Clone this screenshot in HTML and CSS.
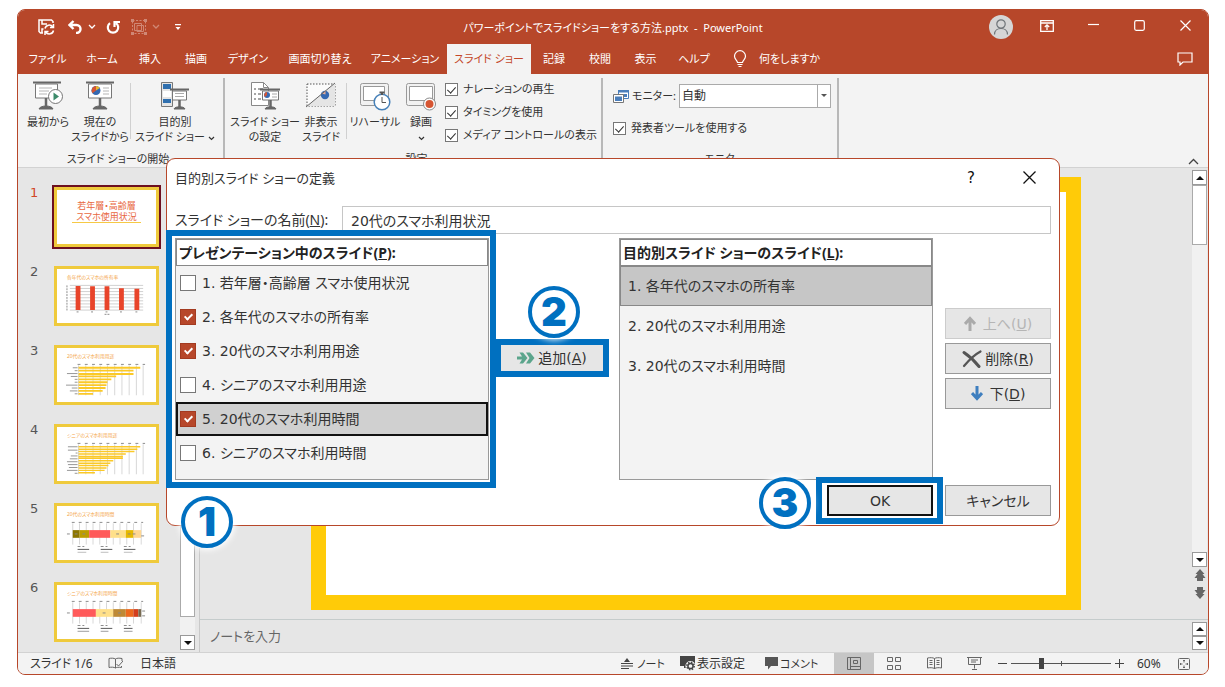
FILE: index.html
```html
<!DOCTYPE html>
<html lang="ja">
<head>
<meta charset="utf-8">
<title>パワーポイントでスライドショーをする方法.pptx - PowerPoint</title>
<link rel="stylesheet" href="styles.css">
</head>
<body>
<div class="window">
  <header class="titlebar">
    <div class="quick">
      <button class="qbtn save" aria-label="上書き保存"><svg width="17" height="17" viewBox="0 0 17 17" fill="none" stroke="#fff" stroke-width="1.500"><path d="M5 14H2.500L1 12.500V1h12.500l1.500 1.500V4M4 1v4h5M4 14v-4h1.500"/><path d="M7 9.500a4.300 4.300 0 0 1 7.800-1.500M15.500 11.500a4.300 4.300 0 0 1-7.800 1.500M15.500 5v3.500H12M7 16v-3.500h3.500"/></svg></button>
      <button class="qbtn undo" aria-label="元に戻す"><svg width="14" height="14" viewBox="0 0 14 14" fill="none" stroke="#fff" stroke-width="2.400"><path d="M5.500 1 1.500 5l4 4M2 5h6.500a4 4 0 0 1 0 8H8"/></svg></button>
      <button class="qbtn chev1" aria-label="元に戻す一覧"><svg width="8" height="6" viewBox="0 0 8 6" fill="none" stroke="#fff" stroke-width="1.300"><path d="m1 1 3 3 3-3"/></svg></button>
      <button class="qbtn redo" aria-label="繰り返し"><svg width="15" height="15" viewBox="0 0 15 15" fill="none" stroke="#fff" stroke-width="2.200"><path d="M10 3.200A5.200 5.200 0 1 1 4 3.200M8.500 7V2h5.500"/></svg></button>
      <button class="qbtn group faint" aria-label="グループ化"><svg width="16" height="16" viewBox="0 0 16 16" fill="none" stroke="#fff"><path d="M1.500 1.500h13v13h-13z" stroke-dasharray="2 1.500"/><path d="M3.500 4.500h7v7h-7zM6 6.500h6.500v6H6z"/><path d="M0 0h3v3H0zM13 0h3v3h-3zM0 13h3v3H0zM13 13h3v3h-3z" fill="#fff" stroke="none"/></svg></button>
      <button class="qbtn chev2 faint" aria-label="グループ化一覧"><svg width="8" height="6" viewBox="0 0 8 6" fill="none" stroke="#fff" stroke-width="1.300"><path d="m1 1 3 3 3-3"/></svg></button>
      <button class="qbtn more" aria-label="ユーザー設定"><svg width="6" height="7" viewBox="0 0 6 7" fill="#fff"><path d="M0 0h6v1.200H0zM.5 3h5L3 6z"/></svg></button>
    </div>
    <h1 class="doc-title">パワーポイントでスライドショーをする方法.pptx&nbsp; -&nbsp; PowerPoint</h1>
    <div class="caption">
      <button class="avatar" aria-label="アカウント"><svg width="24" height="24" viewBox="0 0 24 24" fill="none" stroke="#6e7377" stroke-width="1.200"><circle cx="12" cy="9" r="4.200"/><path d="M5.500 19.500c0-8 13-8 13 0"/></svg></button>
      <button class="cbtn" aria-label="リボンの表示オプション"><svg width="14" height="12" viewBox="0 0 14 12" fill="none" stroke="#fff" stroke-width="1.300"><path d="M.7.7h12.600v10.600H.7zM.7 3h12.600M7 10V5M4.800 7 7 4.800 9.200 7"/></svg></button>
      <button class="cbtn" aria-label="最小化"><svg width="11" height="11" viewBox="0 0 11 11" stroke="#fff" stroke-width="1.200"><path d="M0 4.500h11"/></svg></button>
      <button class="cbtn" aria-label="最大化"><svg width="11" height="11" viewBox="0 0 11 11" fill="none" stroke="#fff" stroke-width="1.200"><rect x=".7" y=".7" width="9.600" height="9.600" rx="1.500"/></svg></button>
      <button class="cbtn" aria-label="閉じる"><svg width="11" height="11" viewBox="0 0 11 11" stroke="#fff" stroke-width="1.200"><path d="m.5.5 10 10M10.500.5l-10 10"/></svg></button>
    </div>
  </header>

  <nav class="tabs">
    <div class="tablist">
      <button class="tab">ファイル</button><button class="tab">ホーム</button><button class="tab">挿入</button><button class="tab">描画</button><button class="tab">デザイン</button><button class="tab">画面切り替え</button><button class="tab">アニメーション</button><button class="tab active">スライド ショー</button><button class="tab">記録</button><button class="tab">校閲</button><button class="tab">表示</button><button class="tab">ヘルプ</button>
    </div>
    <button class="tell"><svg width="14" height="18" viewBox="0 0 14 18" fill="none" stroke="#fff" stroke-width="1.200"><path d="M4.500 12.500c0-2-3-3.300-3-6.300a5.500 5.500 0 0 1 11 0c0 3-3 4.300-3 6.300zM4.500 14.500h5M5.500 16.500h3"/></svg><span>何をしますか</span></button>
    <button class="comment-btn" aria-label="コメント"><svg width="16" height="14" viewBox="0 0 16 14" fill="none" stroke="#fff" stroke-width="1.200"><path d="M1 1h14v9H6l-3 3v-3H1z"/></svg></button>
  </nav>

  <section class="ribbon">
    <div class="rgroup g-start">
      <div class="ritems">
        <button class="rbtn w-a"><svg width="32" height="30" viewBox="0 0 32 30" fill="none"><path d="M3.500 3h22v14h-22z" fill="#fff" stroke="#777"/><path d="M1 1.500h28" stroke="#666" stroke-width="2"/><path d="M7 7h13M7 10h10M7 13h8" stroke="#b5b5b5"/><path d="M14 17v9" stroke="#666" stroke-width="2.500"/><path d="M7 28c1-4 13-4 14 0z" fill="#666" stroke="#666"/><circle cx="23.500" cy="15.500" r="7" fill="#fff" stroke="#777"/><path d="m21.500 11.500 5.500 4-5.500 4z" fill="#3d8b6b"/></svg><span>最初から</span></button>
        <button class="rbtn w-b"><svg width="30" height="30" viewBox="0 0 30 30" fill="none"><path d="M3.500 3h23v14h-23z" fill="#fff" stroke="#777"/><path d="M1 1.500h28" stroke="#666" stroke-width="2"/><circle cx="11" cy="9.500" r="4.500" fill="#3569b2"/><path d="M11 9.500V5a4.500 4.500 0 0 1 3.800 2z" fill="#e9b52c"/><path d="M11 9.500V5a4.500 4.500 0 0 0-3.500 7.200z" fill="#d65532"/><path d="M18 7h6M18 10h6M18 13h6" stroke="#b5b5b5"/><path d="M15 17v9" stroke="#666" stroke-width="2.500"/><path d="M8 28c1-4 13-4 14 0z" fill="#666" stroke="#666"/></svg><span>現在の<br>スライドから</span></button>
        <i class="rline"></i>
        <button class="rbtn w-c"><svg width="30" height="30" viewBox="0 0 30 30" fill="none"><path d="M1.500 1.500h11v24h-11z" fill="#e4e4e4" stroke="#777"/><path d="M3 3h8v5H3zM3 18h8v4H3z" fill="#2f6fae"/><path d="M3 10h8v6H3z" fill="#fff"/><path d="M12.500 10h14v9h-14z" fill="#fff" stroke="#777"/><path d="M10 8.500h19" stroke="#666" stroke-width="2"/><path d="M15 12.500h9M15 15.500h9" stroke="#aaa"/><path d="M19.500 19v7" stroke="#666" stroke-width="2.500"/><path d="M14 28c1-3 10-3 11 0z" fill="#666" stroke="#666"/></svg><span>目的別<br>スライド ショー <svg class="inl" width="7" height="5" viewBox="0 0 7 5" fill="none" stroke="#333" stroke-width="1.200"><path d="M1 1l2.500 2.500L6 1"/></svg></span></button>
      </div>
      <div class="rlabel">スライド ショーの開始</div>
    </div>
    <div class="rgroup g-setup">
      <div class="ritems">
        <button class="rbtn w-d"><svg width="32" height="30" viewBox="0 0 32 30" fill="none"><path d="M2.500 1.500h12l5 5v18h-17z" fill="#fff" stroke="#888"/><path d="M14.500 1.500v5h5" stroke="#888"/><path d="M5 8h2M9 8h5M5 13h2M9 13h3M5 18h2M9 18h3" stroke="#888" stroke-width="1.500"/><path d="M13.500 10h16v9h-16z" fill="#fff" stroke="#777"/><path d="M11 8.500h20" stroke="#666" stroke-width="2"/><circle cx="18" cy="14" r="3" fill="#3569b2"/><path d="M18 14v-3a3 3 0 0 0-2 5z" fill="#d65532"/><path d="M23 13h5M23 16h5" stroke="#aaa"/><path d="M21.500 19v7" stroke="#666" stroke-width="2.500"/><path d="M16 28c1-3 10-3 11 0z" fill="#666" stroke="#666"/></svg><span>スライド ショー<br>の設定</span></button>
        <button class="rbtn w-e"><svg width="30" height="30" viewBox="0 0 30 30" fill="none"><path d="M1 3h28v22H1z" fill="#fbfbfb" stroke="#555" stroke-dasharray="1.500 1.500"/><path d="M1 25 29 2v23z" fill="#e5e5e5"/><circle cx="19" cy="14" r="4.200" fill="#3569b2"/><path d="m15.500 12.500 4-3v4z" fill="#e5ad9c"/><path d="M0 26 29 2" stroke="#666"/></svg><span>非表示<br>スライド</span></button>
        <i class="rline"></i>
        <button class="rbtn w-f"><svg width="32" height="30" viewBox="0 0 32 30" fill="none"><rect x="1.500" y="2.500" width="28" height="22" rx="2" fill="#f2f2f2" stroke="#999"/><path d="M4.500 5.500h21v14h-21z" fill="#fff" stroke="#999"/><circle cx="23" cy="21" r="7.800" fill="#fff" stroke="#4680b8" stroke-width="1.500"/><path d="M20.500 11.500h5M23 12v2" stroke="#555" stroke-width="2"/><path d="M23 16v5.500h4" stroke="#555"/></svg><span>リハーサル</span></button>
        <button class="rbtn w-g"><svg width="32" height="30" viewBox="0 0 32 30" fill="none"><rect x="1.500" y="2.500" width="28" height="22" rx="2" fill="#f2f2f2" stroke="#999"/><path d="M4.500 5.500h23v14h-23z" fill="#fff" stroke="#999"/><circle cx="24.500" cy="23" r="6" fill="#fff" stroke="#888"/><circle cx="24.500" cy="23" r="4" fill="#d65532"/></svg><span>録画<br><svg class="inl" width="7" height="5" viewBox="0 0 7 5" fill="none" stroke="#333" stroke-width="1.200"><path d="M1 1l2.500 2.500L6 1"/></svg></span></button>
        <div class="rchecks">
          <label><input type="checkbox" class="chk" checked>ナレーションの再生</label>
          <label><input type="checkbox" class="chk" checked>タイミングを使用</label>
          <label><input type="checkbox" class="chk" checked>メディア コントロールの表示</label>
        </div>
      </div>
      <div class="rlabel">設定</div>
    </div>
    <div class="rgroup g-monitor">
      <div class="ritems monitor">
        <div class="mrow"><svg width="16" height="15" viewBox="0 0 16 15"><path d="M5.500 1.500h10v8h-10z" fill="#fff" stroke="#4a7ebb"/><path d="M5 1h11v2.500H5zM9 5h5v3H9z" fill="#4a7ebb"/><path d="M.5 5.500h10v8H.5z" fill="#fff" stroke="#777"/><path d="M2 7.500h7V12H2z" fill="#4a7ebb"/></svg><label for="mon">モニター:</label>
          <span class="combo"><select id="mon"><option>自動</option></select></span></div>
        <label class="mcheck"><input type="checkbox" class="chk" checked>発表者ツールを使用する</label>
      </div>
      <div class="rlabel">モニター</div>
    </div>
    <button class="collapse" aria-label="リボンを折りたたむ"><svg width="11" height="7" viewBox="0 0 11 7" fill="none" stroke="#444" stroke-width="1.300"><path d="m1 6 4.500-4.500L10 6"/></svg></button>
  </section>

  <main class="work">
    <aside class="pane">
      <ol class="thumbs">
        <li class="cur"><span class="num">1</span><div class="thumb cover"><span>若年層・高齢層</span><span>スマホ使用状況</span></div></li>
        <li><span class="num">2</span><div class="thumb"><svg viewBox="0 0 100 56"><text x="9" y="10" class="tt">各年代のスマホの所有率</text><path d="M12 17h76M12 20.200h76M12 23.400h76M12 26.600h76M12 29.800h76M12 33h76M12 36.200h76M12 39.400h76M12 42.600h76" stroke="#bbb" stroke-width=".7"/><path d="M18 17.500h5v25h-5zM33 18h5v24.500h-5zM48 18h5v24.500h-5zM63 20h5v22.500h-5zM79 20.500h5v22h-5z" fill="#e8442a"/><path d="M19 44.500h3M34 44.500h3M49 44.500h3M64 44.500h3M80 44.500h3M48 47h5M9 17v26" stroke="#888" stroke-width="1" stroke-dasharray="2 1"/></svg></div></li>
        <li><span class="num">3</span><div class="thumb"><svg viewBox="0 0 100 56"><text x="9" y="10" class="tt">20代のスマホ利用用途</text><path d="M21 18v31M28.500 18v31M36 18v31M43.500 18v31M51 18v31M58.500 18v31M66 18v31M73.500 18v31M81 18v31M88 18v31" stroke="#bbb" stroke-width=".6"/><path d="M21 20.500h64M21 23.500h57M21 27h57M21 29.500h39M21 32.500h34M21 35.500h30M21 38.500h29M21 41.500h28M21 44.500h25M21 47.500h15" stroke="#fbc928" stroke-width="1.900"/><path d="M20 17h70" stroke="#888" stroke-dasharray="3 4.500"/><path d="M15 20.500h5M17 23.500h3M9 26.500h11M13 29.500h7M17 32.500h3M17 35.500h3M8 38.500h12M14 41.500h6M12 44.500h8M17 47.500h3" stroke="#888" stroke-width=".9"/></svg></div></li>
        <li><span class="num">4</span><div class="thumb"><svg viewBox="0 0 100 56"><text x="9" y="10" class="tt">シニアのスマホ利用用途</text><path d="M21 18v31M28.500 18v31M36 18v31M43.500 18v31M51 18v31M58.500 18v31M66 18v31M73.500 18v31M81 18v31M88 18v31" stroke="#bbb" stroke-width=".6"/><path d="M21 20.500h64M21 23h61M21 25.500h58M21 28h49M21 30.500h46M21 32.500h46M21 35h36M21 37.500h33M21 40h31M21 42.500h29M21 45h27M21 47.500h17" stroke="#fbc928" stroke-width="1.500"/><path d="M20 17h70" stroke="#888" stroke-dasharray="3 4.500"/><path d="M10 20.500h10M10 24h10M18 27h2M13 30h7M12 33h8M9 36h11M10 39h10M11 42h9M9 45h11M17 48h3" stroke="#888" stroke-width=".9"/></svg></div></li>
        <li><span class="num">5</span><div class="thumb"><svg viewBox="0 0 100 56"><text x="9" y="10" class="tt">20代のスマホ利用時間</text><path d="M15 18v22M22 18v22M29 18v22M36 18v22M43 18v22M50 18v22M57 18v22M64 18v22M71 18v22M78 18v22M86 18v22" stroke="#bbb" stroke-width=".6"/><path d="M15 25h7v8h-7z" fill="#8c7600"/><path d="M22 25h10v8H22z" fill="#bd9d00"/><path d="M32 25h22v8H32z" fill="#ff5a5a"/><path d="M54 25h16v8H54z" fill="#ffe08a"/><path d="M70 25h8v8h-8z" fill="#e6b800"/><path d="M78 25h8v8h-8z" fill="#ffd794"/><path d="M14 17h74" stroke="#888" stroke-dasharray="3 4.200"/><path d="M9 29h5M17 29h3M25 29h4M60 29h4M72 29h10M86 31h4M20 42h7M44 42h7M68 42h7" stroke="#888" stroke-dasharray="3 2"/><path d="M20 45h12M44 45h12M68 45h12" stroke="#555"/><path d="M20 48h9M44 48h8M68 48h9" stroke="#bbb"/></svg></div></li>
        <li><span class="num">6</span><div class="thumb"><svg viewBox="0 0 100 56"><text x="9" y="10" class="tt">シニアのスマホ利用時間</text><path d="M15 18v22M22 18v22M29 18v22M36 18v22M43 18v22M50 18v22M57 18v22M64 18v22M71 18v22M78 18v22M86 18v22" stroke="#bbb" stroke-width=".6"/><path d="M15 25h24v8H15z" fill="#ff5a5a"/><path d="M39 25h18v8H39z" fill="#ffe08a"/><path d="M57 25h13v8H57z" fill="#bf8a35"/><path d="M70 25h8v8h-8z" fill="#ed6a1f"/><path d="M78 25h5v8h-5z" fill="#d43e1d"/><path d="M83 25h3v8h-3z" fill="#776a50"/><path d="M14 17h74" stroke="#888" stroke-dasharray="3 4.200"/><path d="M9 29h5M46 29h4M62 29h3M87 27h3M87 32h3M20 42h7M44 42h7M68 42h7" stroke="#888" stroke-dasharray="3 2"/><path d="M20 45h12M44 45h12M68 45h9" stroke="#555"/><path d="M20 48h12M44 48h8M68 48h9" stroke="#999"/></svg></div></li>
      </ol>
      <div class="vscroll pane-scroll"><div class="sthumb"></div><div class="sgap"></div><button class="sbtn" aria-label="下へスクロール"><i class="dn"></i></button></div>
    </aside>
    <div class="editor">
      <div class="stage">
        <div class="slide"></div>
        <div class="vscroll"><button class="sbtn" aria-label="上へスクロール"><i class="up"></i></button><div class="sthumb short"></div><div class="sgap"></div><button class="sbtn" aria-label="下へスクロール"><i class="dn"></i></button>
          <button class="jump" aria-label="前のスライド"><svg width="12" height="13" viewBox="0 0 12 13" fill="#666"><path d="M6 0l4.500 5H8.500l3 4H9v3H3V9H.5l3-4H1.500z"/></svg></button>
          <button class="jump" aria-label="次のスライド"><svg width="12" height="13" viewBox="0 0 12 13" fill="#666"><path d="M6 13l4.500-5H8.500l3-4H9V1H3v3H.5l3 4H1.500z"/></svg></button>
        </div>
      </div>
      <div class="notes"><span>ノートを入力</span><div class="vscroll nscroll"><button class="sbtn" aria-label="上"><i class="up"></i></button><button class="sbtn" aria-label="下"><i class="dn"></i></button></div></div>
    </div>
  </main>

  <footer class="status">
    <span class="s-slide">スライド 1/6</span>
    <svg class="s-book" width="15" height="13" viewBox="0 0 15 13" fill="none" stroke="#666"><path d="M7.500 2C6 1 3 1 1 1.500v9c2-.5 5-.5 6.500.5V2C9 1 11 1 14 1.500V4M7.500 11c1-.7 3-1 6-.5V9M8.500 7l2 2L15 4"/></svg>
    <span>日本語</span>
    <div class="s-right">
      <button class="sb b1"><svg width="12" height="11" viewBox="0 0 12 11" fill="#444"><path d="M6 0l3 4H3zM0 5h12v1H0zM0 7.500h12v1H0zM0 10h8v1H0z"/></svg>ノート</button>
      <button class="sb b2"><svg width="16" height="15" viewBox="0 0 16 15"><path d="M0 0h15v9H9v3H4v-2H0z" fill="#444"/><circle cx="10.500" cy="10" r="3.600" fill="none" stroke="#f3f3f3" stroke-width="3"/><circle cx="10.500" cy="10" r="2.600" fill="#f3f3f3" stroke="#444" stroke-width="1.500"/><circle cx="10.500" cy="10" r="3.700" fill="none" stroke="#444" stroke-width="1.500" stroke-dasharray="1.450"/></svg>表示設定</button>
      <button class="sb b3"><svg width="15" height="13" viewBox="0 0 15 13" fill="#555"><path d="M1 0h13v9H7l-3 3.500V9H1z"/></svg>コメント</button>
      <button class="vb on" aria-label="標準"><svg width="14" height="13" viewBox="0 0 14 13" fill="none" stroke="#666"><path d="M.5.500h13v12H.500zM3.500.500v12M3.500 9.500h10M6.500 3.500h4v3h-4z"/></svg></button>
      <button class="vb" aria-label="スライド一覧"><svg width="14" height="13" viewBox="0 0 14 13" fill="none" stroke="#666"><path d="M.5.500h5v4h-5zM8.500.500h5v4h-5zM.5 8.500h5v4h-5zM8.500 8.500h5v4h-5z"/></svg></button>
      <button class="vb" aria-label="閲覧表示"><svg width="15" height="13" viewBox="0 0 15 13" fill="none" stroke="#666"><path d="M7.500 1.500v10.500M7.500 1.500C6 .5 3 .5 .5 1v10c2.500-.5 5-.5 7 .5 2-1 4.500-1 7-.5V1c-2.500-.5-5.500-.5-7 .5M2.500 3.500h3M2.500 5.500h3M2.500 7.500h3M9.500 3.500h3M9.500 5.500h3M9.500 7.500h3"/></svg></button>
      <button class="vb" aria-label="スライド ショー"><svg width="15" height="13" viewBox="0 0 15 13" fill="none" stroke="#666"><path d="M0 .5h15M1.500.5v7h12v-7M4 3h7M4 5h5M7.500 7.500v4M5 12.500h5"/></svg></button>
      <button class="zb" aria-label="縮小"><svg width="9" height="9" viewBox="0 0 9 9" stroke="#444"><path d="M0 4.500h9"/></svg></button>
      <input class="zoom" type="range" min="0" max="100" value="29" aria-label="ズーム">
      <button class="zb" aria-label="拡大"><svg width="9" height="9" viewBox="0 0 9 9" stroke="#444"><path d="M0 4.500h9M4.500 0v9"/></svg></button>
      <span class="pct">60%</span>
      <button class="fit" aria-label="ウィンドウに合わせる"><svg width="12" height="12" viewBox="0 0 12 12" fill="none" stroke="#666"><rect x=".5" y=".5" width="11" height="11" rx="1"/><path d="M6 2v2.500M6 7.500V10M2 6h2.500M7.500 6H10M5 3l1-1 1 1M5 9l1 1 1-1M3 5 2 6l1 1M9 5l1 1-1 1"/></svg></button>
    </div>
  </footer>

  <section class="dialog" role="dialog" aria-labelledby="dlg">
    <div class="dhead"><h2 id="dlg">目的別スライド ショーの定義</h2><div class="dctl"><button aria-label="ヘルプ">?</button><button aria-label="閉じる"><svg width="13" height="13" viewBox="0 0 13 13" stroke="#111" stroke-width="1.300"><path d="m.5.500 12 12M12.500.500l-12 12"/></svg></button></div></div>
    <div class="dname"><label for="nm">スライド ショーの名前(<u>N</u>):</label><input id="nm" type="text" value="20代のスマホ利用状況"></div>
    <div class="dbody">
      <div class="list checks">
        <div class="lh">プレゼンテーション中のスライド(<u>P</u>):</div>
        <label><input type="checkbox" class="big">1. 若年層・高齢層 スマホ使用状況</label>
        <label><input type="checkbox" class="big" checked>2. 各年代のスマホの所有率</label>
        <label><input type="checkbox" class="big" checked>3. 20代のスマホ利用用途</label>
        <label><input type="checkbox" class="big">4. シニアのスマホ利用用途</label>
        <label class="focus"><input type="checkbox" class="big" checked>5. 20代のスマホ利用時間</label>
        <label><input type="checkbox" class="big">6. シニアのスマホ利用時間</label>
        <div class="mark mark1"></div><div class="badge badge1">1</div>
      </div>
      <div class="addcol"><div class="badge badge2">2</div>
        <button class="btn add"><svg width="18" height="14" viewBox="0 0 18 14" fill="#5ba58c"><path d="M0 5.500h5L2.500 1.500h3.500L10.500 7 6 12.500H2.500L5 8.500H0zM9 1.500h4L17.500 7 13 12.500H9L12.500 7z"/></svg>追加(<u>A</u>)</button></div>
      <div class="list picks">
        <div class="lh">目的別スライド ショーのスライド(<u>L</u>):</div>
        <button class="pick sel">1. 各年代のスマホの所有率</button>
        <button class="pick">2. 20代のスマホ利用用途</button>
        <button class="pick">3. 20代のスマホ利用時間</button>
      </div>
      <div class="side">
        <button class="btn" disabled><svg width="12" height="15" viewBox="0 0 12 15" fill="none" stroke="#aaa" stroke-width="3"><path d="M6 15V2M1 8l5-5.500L11 8"/></svg>上へ(<u>U</u>)</button>
        <button class="btn del"><svg width="20" height="18" viewBox="0 0 20 18" fill="none" stroke="#555" stroke-linecap="round"><path d="M2 2.500c6 4 11 9 15 14" stroke-width="3"/><path d="M18.500 1.500C12 5 7 10 2 16" stroke-width="2.200"/></svg>削除(<u>R</u>)</button>
        <button class="btn down"><svg width="12" height="15" viewBox="0 0 12 15" fill="none" stroke="#3f7fbf" stroke-width="3"><path d="M6 0v13M1 7l5 5.500L11 7"/></svg>下(<u>D</u>)</button>
      </div>
    </div>
    <div class="dfoot"><div class="okwrap"><button class="btn ok">OK</button><div class="mark mark3"></div><div class="badge badge3">3</div></div><button class="btn">キャンセル</button></div>
  </section>
</div>
</body>
</html>
```

FILE: styles.css
```css
*, *::before, *::after { box-sizing: border-box; }
body {
  margin: 0;
  height: 100vh;
  padding: 9px 16px 12px 17px;
  background: #fff;
  color: #333;
  font: 12px/16px "Noto Sans", "Noto Sans CJK JP", sans-serif;
  font-feature-settings: "palt";
  overflow: hidden;
}
button, input, select { font: inherit; color: inherit; font-feature-settings: inherit; }
button { border: 0; background: none; padding: 0; margin: 0; white-space: nowrap; }
h1, h2 { margin: 0; font-weight: 400; }
svg { display: block; flex: none; }

.window {
  position: relative;
  display: flex;
  flex-direction: column;
  height: 100%;
  border: 1px solid #b7472a;
  border-radius: 8px;
  background: #e6e6e6;
}

/* title bar */
.titlebar {
  display: grid;
  grid-template-columns: 1fr auto 1fr;
  align-items: center;
  height: 34px;
  background: #b7472a;
  border-radius: 7px 7px 0 0;
  color: #fff;
}
.quick { display: flex; align-items: center; padding-left: 20px; }
.undo { margin-left: 13px; }
.chev1 { margin-left: 6px; }
.redo { margin-left: 10px; }
.group { margin-left: 10px; }
.chev2 { margin-left: 5px; }
.more { margin-left: 15px; }
.faint { opacity: .35; }
.doc-title { font-size: 11px; line-height: 18px; padding-top: 2px; }
.caption { display: flex; align-items: center; justify-content: flex-end; }
.avatar { width: 24px; height: 24px; border-radius: 50%; background: #d6d6d6; margin-right: 11px; }
.cbtn { width: 46px; height: 34px; display: grid; place-items: center; padding-bottom: 3px; }

/* tabs */
.tabs { display: flex; align-items: stretch; height: 30px; background: #b7472a; color: #fff; font-size: 11px; }
.tablist { display: grid; grid-template-columns: 59px 50px 46px 46px 58px 86px 84px 84px 46px 46px 45px 52px; }
.tab { display: flex; align-items: center; justify-content: center; }
.tab.active { background: #f3f3f3; color: #c4472a; }
.tell { display: flex; align-items: center; gap: 12px; margin-left: 13px; }
.comment-btn { margin-left: auto; padding-right: 15px; }

/* ribbon */
.ribbon { display: flex; height: 94px; background: #f3f3f3; border-bottom: 1px solid #d2d2d2; padding-top: 4px; font-size: 11px; }
.rgroup { display: flex; flex-direction: column; flex: none; border-right: 2px solid #b8b8b8; padding-left: 5px; }
.g-start { width: 207px; }
.g-setup { width: 378px; padding-left: 7px; }
.g-monitor { width: 236px; padding-left: 10px; }
.ritems { display: flex; align-items: flex-start; height: 73px; padding-top: 3px; }
.rbtn { display: flex; flex: none; flex-direction: column; align-items: center; gap: 3px; line-height: 15px; }
.rbtn span { text-align: center; }
.inl { display: inline-block; vertical-align: middle; }
.w-a { width: 50px; }
.w-b { width: 54px; }
.w-c { width: 86px; }
.w-d { width: 66px; }
.w-e { width: 46px; }
.w-f { width: 56px; }
.w-g { width: 36px; }
.rline { flex: none; width: 1px; height: 56px; margin: 2px 1px 0 3px; background: #d0d0d0; }
.g-setup .rline { margin: 2px 0 0 2px; }
.rlabel { text-align: center; line-height: 15px; }
.g-start .rlabel { padding-right: 10px; }
.rchecks { display: flex; flex-direction: column; gap: 7px; padding-left: 6px; }
.rchecks label, .mcheck { display: flex; align-items: center; gap: 5px; white-space: nowrap; }
.chk, .big { appearance: none; flex: none; margin: 0; position: relative; width: 13px; height: 13px; background: #fff; border: 1px solid #777; }
.chk:checked::after {
  content: ""; position: absolute; left: 3px; top: 1px; width: 5px; height: 8px;
  border: solid #333; border-width: 0 1px 1px 0; transform: rotate(42deg);
}
.monitor { flex-direction: column; gap: 12px; }
.mrow { display: flex; align-items: center; gap: 3px; width: 218px; height: 24px; margin-top: 3px; white-space: nowrap; }
.combo { position: relative; margin-left: auto; width: 154px; }
.combo select { appearance: none; display: block; width: 100%; height: 24px; border: 1px solid #aaa; border-radius: 0; background: #fff; padding: 0 2px; font-size: 12px; }
.combo::after {
  content: ""; position: absolute; right: 4px; top: 10px;
  border: 3px solid transparent; border-top-color: #555; border-bottom: 0;
}
.combo::before { content: ""; position: absolute; right: 13px; top: 0; height: 24px; border-left: 1px solid #aaa; }
.collapse { margin: auto 9px 2px auto; }

/* workspace */
.work { display: flex; flex: 1; min-height: 0; }
.pane { display: flex; width: 182px; border-right: 1px solid #c9c9c9; padding-right: 3px; }
.thumbs { flex: 1; list-style: none; margin: 0; padding: 19px 0 0 12px; display: flex; flex-direction: column; gap: 19px; }
.thumbs li { display: flex; height: 60px; gap: 15px; }
.num { width: 9px; font: 13px/12px "DejaVu Sans", sans-serif; color: #555; }
.cur .num { color: #d24726; }
.thumb { width: 105px; height: 60px; border: 3px solid #efca3c; background: #fff; }
.thumb svg { width: 100%; height: 100%; }
.cur .thumb { outline: 2px solid #6d1020; }
.cover { display: flex; flex-direction: column; align-items: center; padding-top: 10px; font-size: 9px; line-height: 11px; color: #e8683f; }
.cover span:last-child { padding: 0 4px; border-bottom: 1px solid #f6c945; }
.tt { font-size: 5px; fill: #f4a445; }
.vscroll { display: flex; flex-direction: column; width: 16px; flex: none; }
.sbtn { width: 15px; height: 15px; background: #fff; border: 1px solid #999; display: grid; place-items: center; flex: none; }
.up, .dn { border: 4px solid transparent; }
.up { border-bottom-color: #111; border-top: 0; }
.dn { border-top-color: #111; border-bottom: 0; }
.sthumb { width: 15px; height: 449px; background: #fff; border: 1px solid #aaa; flex: none; }
.sthumb.short { height: 60px; }
.sgap { flex: 1; width: 15px; background: #f1f1f1; }
.pane-scroll { padding-bottom: 2px; }
.editor { flex: 1; display: flex; flex-direction: column; min-width: 0; }
.stage { flex: 1; display: flex; min-height: 0; }
.slide { flex: 1; margin: 9px 111px 9px; border: 15px solid #ffcb08; background: #fff; }
.stage .vscroll { padding: 2px 0 18px; height: 100%; }
.jump { width: 15px; height: 17px; display: grid; place-items: center; flex: none; }
.notes { display: flex; justify-content: space-between; align-items: center; height: 33px; border-top: 1px solid #c5cccc; padding-left: 10px; color: #666; font-size: 13px; }
.nscroll .sbtn { height: 14px; }

/* status bar */
.status { display: flex; align-items: center; height: 22px; background: #f3f3f3; border-top: 1px solid #d2d2d2; border-radius: 0 0 7px 7px; padding-left: 12px; }
.s-slide { width: 78px; }
.s-book { margin-right: 17px; }
.s-right { display: flex; align-items: center; height: 100%; margin-left: auto; padding-right: 18px; }
.sb { display: flex; align-items: center; gap: 1px; }
.b1 { width: 59px; gap: 4px; font-size: 11px; }
.b2 { width: 84px; }
.b3 { width: 70px; font-size: 11px; }
.vb { width: 40px; height: 100%; display: grid; place-items: center; }
.vb.on { background: #c6c6c6; }
.zb { margin: 0 4px; }
.zoom {
  appearance: none; width: 100px; height: 12px; margin: 0;
  background: linear-gradient(#555, #555) 50% 50% / 1px 5px no-repeat, linear-gradient(#555, #555) 0 50% / 100% 1px no-repeat;
}
.zoom::-webkit-slider-thumb { appearance: none; width: 5px; height: 11px; background: #444; }
.pct { width: 50px; padding-left: 9px; }

/* dialog */
.dialog {
  position: absolute; left: 148px; right: 148px; top: 148px;
  border: 1px solid #b7472a; border-radius: 9px; background: #fff;
  padding: 0 8px 9px;
  font-size: 14px; line-height: 20px; color: #333;
}
.dhead { display: flex; justify-content: space-between; align-items: center; height: 37px; }
.dhead h2 { font-size: 13px; }
.dctl { display: flex; }
.dctl button { width: 58px; height: 30px; display: grid; place-items: center; color: #111; font: 15px/20px "DejaVu Sans", sans-serif; }
.dctl button:last-child { margin-right: -7px; }
.dname { display: flex; align-items: center; height: 28px; margin-top: 10px; }
.dname label { width: 167px; white-space: nowrap; }
.dname input { flex: 1; height: 28px; border: 1px solid #c6c6c6; padding: 0 8px; background: #fff; }
.dbody { display: grid; grid-template-columns: 1fr 130px 1fr 118px; height: 242px; margin-top: 4px; }
.list { position: relative; border: 1px solid #999; background: #f3f3f3; display: flex; flex-direction: column; }
.lh { height: 27px; background: #fff; border: 1px solid #888; padding: 0 2px; line-height: 25px; font-weight: 700; white-space: nowrap; color: #222; }
.checks label, .pick, .btn, .dname input { font-family: "DejaVu Sans", "Noto Sans CJK JP", sans-serif; }
.checks label { display: flex; align-items: center; gap: 6px; height: 34px; padding: 0 4px; white-space: nowrap; }
.checks .focus { border: 2px solid #111; background: #d0d0d0; padding: 0 2px; }
.big { width: 16px; height: 16px; }
.big:checked { background: #b7472a; border-color: #a33a20; }
.big:checked::after {
  content: ""; position: absolute; left: 5px; top: 2px; width: 5px; height: 8px;
  border: solid #fff; border-width: 0 2px 2px 0; transform: rotate(45deg);
}
.pick { display: block; height: 40px; padding: 0 8px; text-align: left; }
.pick.sel { background: #c6c6c6; border: 1px solid #888; padding: 0 7px; }
.btn { height: 31px; width: 106px; background: #e6e6e6; border: 1px solid #999; display: flex; align-items: center; justify-content: center; }
.btn svg { margin-right: 7px; }
.btn:disabled { color: #b5b5b5; border-color: #ccc; }
.del svg { margin-right: 3px; }
.addcol { position: relative; padding: 101px 10px 0 6px; }
.add { width: 114px; height: 38px; border: 6px solid #0070c0; }
.add svg { margin-right: 3px; }
.side { display: flex; flex-direction: column; align-items: flex-end; gap: 4px; padding-top: 70px; }
.dfoot { display: flex; justify-content: flex-end; gap: 12px; margin-top: 5px; }
.okwrap { position: relative; }
.ok { border: 2px solid #111; }

/* callouts */
.mark { position: absolute; border: 6px solid #0070c0; pointer-events: none; }
.mark1 { inset: -9px -8px; left: -10px; }
.mark3 { inset: -8px -10px; left: -11px; }
.badge {
  position: absolute; width: 52px; height: 52px; border-radius: 50%; border: 4px solid #0070c0;
  background: #fff; box-shadow: 0 0 6px 2px #fff; color: #0070c0;
  font: 900 40px/44px "Inter", "Open Sans", sans-serif; text-align: center;
}
.badge1 { left: 5px; top: 257px; }
.badge2 { left: 39px; top: 48px; }
.badge3 { left: -68px; top: -8px; }
```
